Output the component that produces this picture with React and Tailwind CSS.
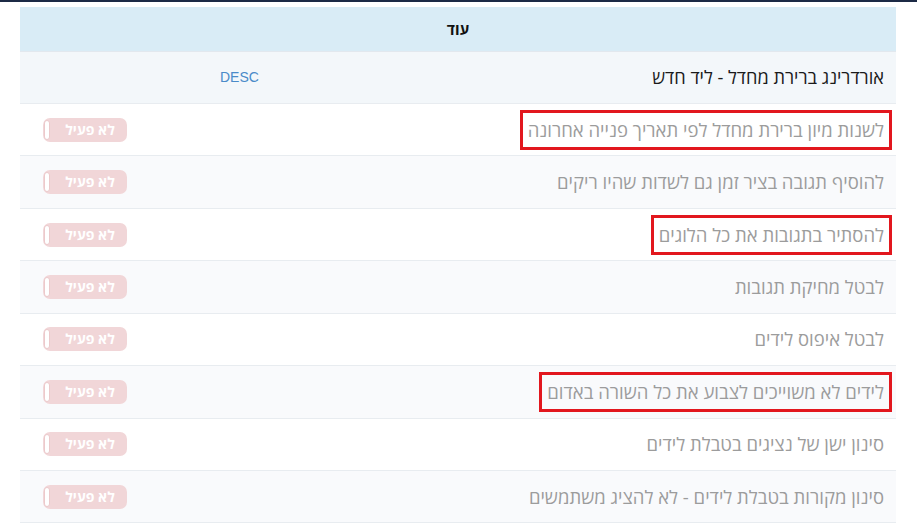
import React from "react";

const rows = [
  { text: "לשנות מיון ברירת מחדל לפי תאריך פנייה אחרונה", boxed: true },
  { text: "להוסיף תגובה בציר זמן גם לשדות שהיו ריקים" },
  { text: "להסתיר בתגובות את כל הלוגים", boxed: true },
  { text: "לבטל מחיקת תגובות" },
  { text: "לבטל איפוס לידים" },
  { text: "לידים לא משוייכים לצבוע את כל השורה באדום", boxed: true },
  { text: "סינון ישן של נציגים בטבלת לידים" },
  { text: "סינון מקורות בטבלת לידים - לא להציג משתמשים" },
];

function Toggle() {
  return (
    <div className="relative h-[24px] w-[84px] rounded-[7px] bg-[#f1d6d8] flex items-center justify-center pl-[10px]">
      <div className="absolute left-[1px] top-[2px] bottom-[2px] w-[6px] rounded-full bg-white border border-[#ecc9cb]" />
      <span className="text-white font-bold text-[14px] leading-none" dir="rtl">לא פעיל</span>
    </div>
  );
}

export default function App() {
  return (
    <div className="w-[917px] h-[523px] overflow-hidden bg-white" style={{ fontFamily: '"Open Sans", "Liberation Sans", "DejaVu Sans", sans-serif' }}>
      <div className="h-[2px] bg-[#1c2a45]" />
      <div className="ml-[20px] mr-[21px] mt-[5px]" dir="rtl">
        <div className="h-[45px] bg-[#d9ecf6] border-b border-[#e2e8ee] flex items-center justify-center">
          <span className="font-bold text-[15px] text-[#111]">עוד</span>
        </div>
        <div className="h-[52px] bg-[#f3f7fa] border-b border-[#e8ecf0] flex items-center">
          <div className="flex-1 pr-[12px] text-[18.2px] text-[#1a1a1a]">אורדרינג ברירת מחדל - ליד חדש</div>
          <div className="w-[238px] text-[14px] text-[#4a8bc9]" dir="ltr" style={{ fontFamily: '"Liberation Sans", sans-serif' }}>
            <span className="ml-[200px]">DESC</span>
          </div>
        </div>
        {rows.map((r, i) => (
          <div
            key={i}
            className={`h-[52.43px] border-b border-[#e8ecf0] flex items-center ${i % 2 === 0 ? "bg-white" : "bg-[#f9fafc]"}`}
          >
            <div className="flex-1 pr-[4px]">
              <span
                className={`inline-block text-[18.5px] text-[#9c9c9c] leading-[28px] px-[5px] py-[3px] border-[3px] ${r.boxed ? "border-[#e2171e]" : "border-transparent"}`}
              >
                {r.text}
              </span>
            </div>
            <div className="w-[200px] flex justify-end pl-[23px]" dir="ltr">
              <div className="mr-auto">
                <Toggle />
              </div>
            </div>
          </div>
        ))}
      </div>
    </div>
  );
}
